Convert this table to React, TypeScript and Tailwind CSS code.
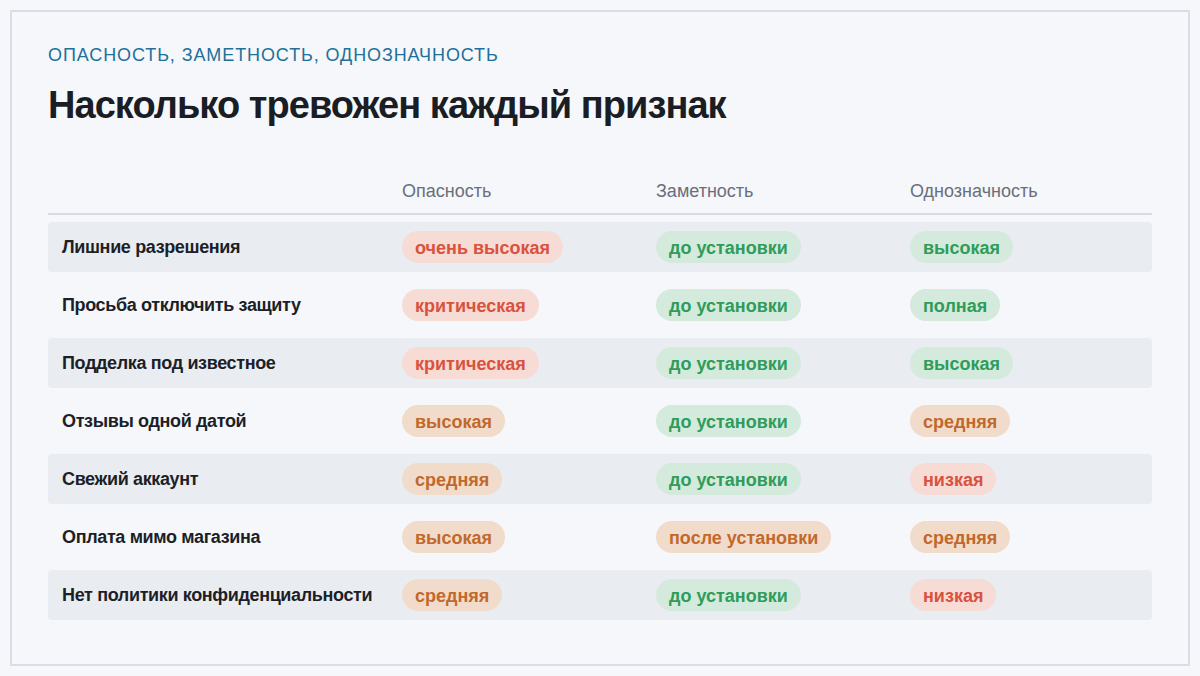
import React from "react";

type Tone = "red" | "green" | "orange";

const TONES: Record<Tone, string> = {
  red: "bg-[#f7dbd5] text-[#d8523d]",
  green: "bg-[#d4eadd] text-[#2f9c5a]",
  orange: "bg-[#f1dccb] text-[#c2682b]",
};

const ROWS: { label: string; cells: [string, Tone][] }[] = [
  { label: "Лишние разрешения", cells: [["очень высокая", "red"], ["до установки", "green"], ["высокая", "green"]] },
  { label: "Просьба отключить защиту", cells: [["критическая", "red"], ["до установки", "green"], ["полная", "green"]] },
  { label: "Подделка под известное", cells: [["критическая", "red"], ["до установки", "green"], ["высокая", "green"]] },
  { label: "Отзывы одной датой", cells: [["высокая", "orange"], ["до установки", "green"], ["средняя", "orange"]] },
  { label: "Свежий аккаунт", cells: [["средняя", "orange"], ["до установки", "green"], ["низкая", "red"]] },
  { label: "Оплата мимо магазина", cells: [["высокая", "orange"], ["после установки", "orange"], ["средняя", "orange"]] },
  { label: "Нет политики конфиденциальности", cells: [["средняя", "orange"], ["до установки", "green"], ["низкая", "red"]] },
];

function Pill({ text, tone }: { text: string; tone: Tone }) {
  return (
    <span className={`inline-flex h-8 items-center rounded-full px-[13px] pt-[2px] text-[18px] font-bold ${TONES[tone]}`}>
      {text}
    </span>
  );
}

export default function App() {
  return (
    <div className="h-[676px] w-[1200px] bg-[#f5f7fa] p-[10px]" style={{ fontFamily: "'Liberation Sans', Arial, sans-serif" }}>
      <div className="h-full border-2 border-[#dadce8] px-[36px] pt-[32px]">
        <div className="text-[18px] leading-[22px] tracking-[0.05em] text-[#22709a]">ОПАСНОСТЬ, ЗАМЕТНОСТЬ, ОДНОЗНАЧНОСТЬ</div>
        <h1 className="mt-[14px] text-[38px] font-bold leading-[50px] tracking-[-0.025em] text-[#1a1d24]">
          Насколько тревожен каждый признак
        </h1>

        <div className="mt-[50px] grid grid-cols-[354px_254px_254px_1fr] border-b-2 border-[#d6dae4] pb-[11px] text-[18px] leading-[22px] text-[#6b6e7a]">
          <div />
          <div>Опасность</div>
          <div>Заметность</div>
          <div>Однозначность</div>
        </div>

        <div className="mt-[7px] flex flex-col gap-2">
          {ROWS.map((r, i) => (
            <div
              key={r.label}
              className={`grid h-[50px] grid-cols-[354px_254px_254px_1fr] items-center rounded-[4px] ${i % 2 === 0 ? "bg-[#e9ecf1]" : ""}`}
            >
              <div className="pl-[14px] text-[18px] font-bold tracking-[-0.02em] text-[#1c1f27]">{r.label}</div>
              {r.cells.map(([t, tone], j) => (
                <div key={j}>
                  <Pill text={t} tone={tone} />
                </div>
              ))}
            </div>
          ))}
        </div>
      </div>
    </div>
  );
}
